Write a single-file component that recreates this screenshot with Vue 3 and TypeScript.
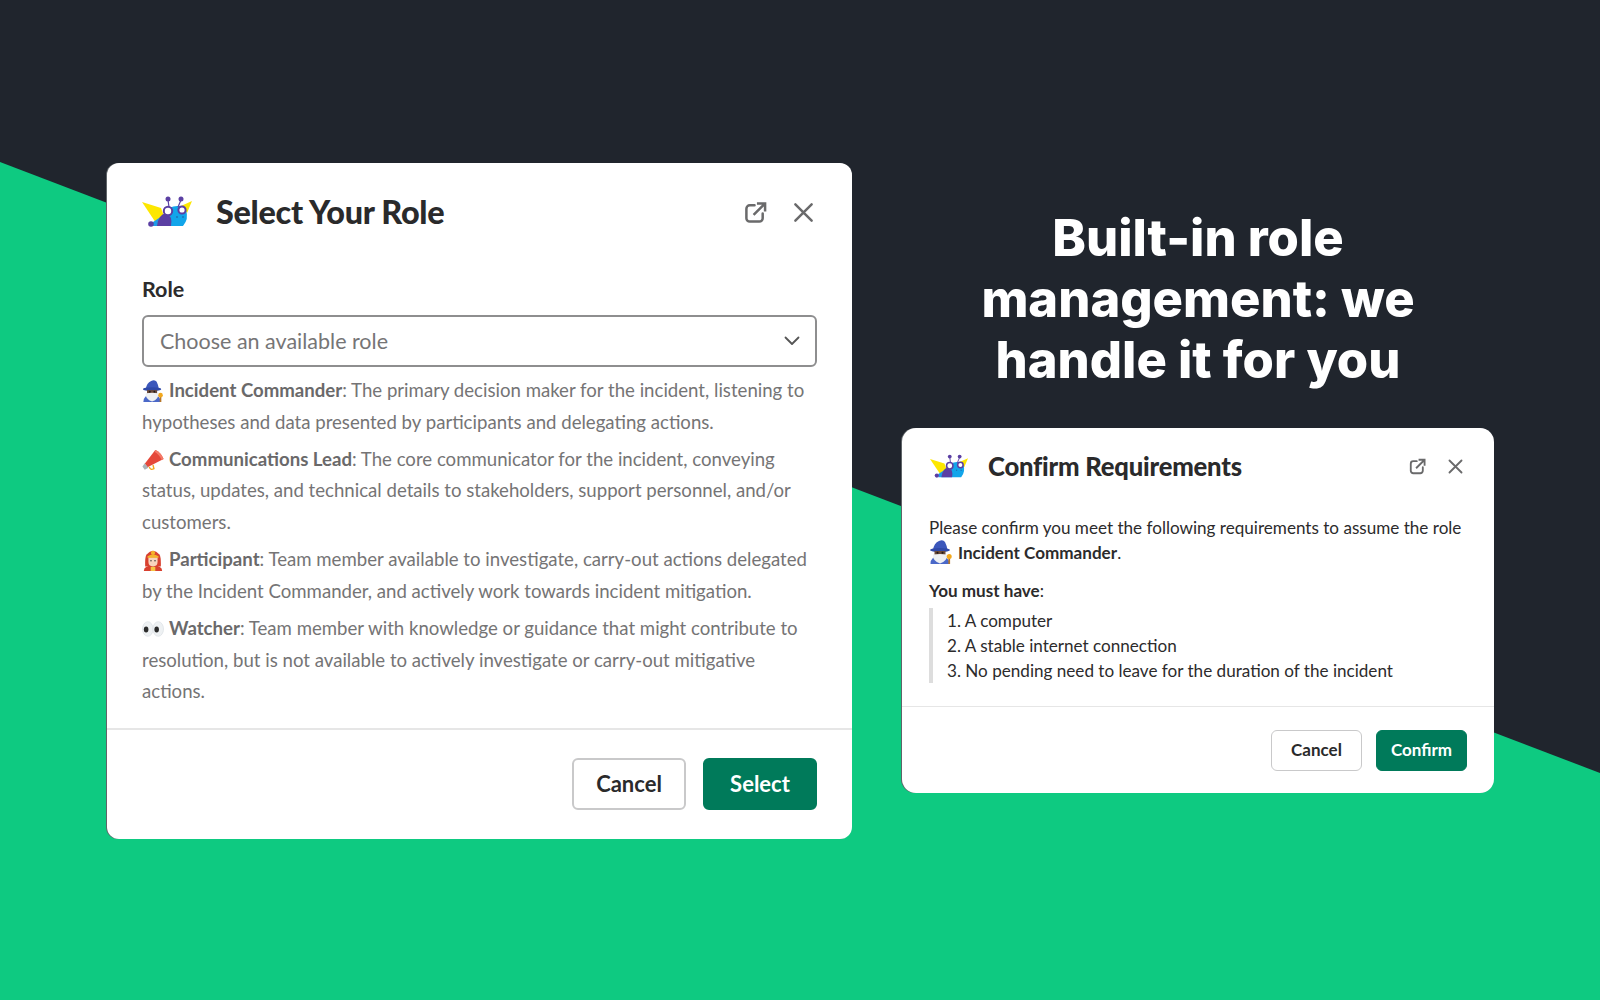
<script setup lang="ts">
interface Role { icon: string; name: string; text: string }
const roles: Role[] = [
  { icon: 'wizard', name: 'Incident Commander', text: ': The primary decision maker for the incident, listening to hypotheses and data presented by participants and delegating actions.' },
  { icon: 'horn', name: 'Communications Lead', text: ': The core communicator for the incident, conveying status, updates, and technical details to stakeholders, support personnel, and/or customers.' },
  { icon: 'fire', name: 'Participant', text: ': Team member available to investigate, carry-out actions delegated by the Incident Commander, and actively work towards incident mitigation.' },
  { icon: 'eyes', name: 'Watcher', text: ': Team member with knowledge or guidance that might contribute to resolution, but is not available to actively investigate or carry-out mitigative actions.' },
]
const requirements: string[] = ['A computer', 'A stable internet connection', 'No pending need to leave for the duration of the incident']
</script>

<template>
  <main class="page">
    <svg class="defs" aria-hidden="true">
      <symbol id="logo" viewBox="0 0 50 32">
        <path d="M0 6 L19 12 L25 28 L14 27 Z" fill="#fde700" />
        <path d="M39 10 L50 5 L45 17 Z" fill="#fde700" />
        <path d="M11 26 L20 20 L26 24 L25 30 L11 30 Z" fill="#1d9be8" />
        <path d="M27 12 Q38 7 44 14 Q47 23 41 30 L25 30 Q29 22 27 12 Z" fill="#12a5ea" />
        <path d="M15 30 Q16 19 24 17 Q31 20 29 30 Z" fill="#5b3fa3" />
        <circle cx="9" cy="28" r="2.800" fill="#5b3fa3" />
        <circle cx="26" cy="15" r="4.200" fill="#fff" stroke="#5b3fa3" stroke-width="2" />
        <circle cx="40" cy="14" r="3.600" fill="#fff" stroke="#5b3fa3" stroke-width="2" />
        <path d="M27 11 L26 4 M36 11 L39 4" stroke="#5b3fa3" stroke-width="1.200" fill="none" />
        <circle cx="26" cy="3" r="2.500" fill="#5b3fa3" />
        <circle cx="39" cy="3" r="2.500" fill="#5b3fa3" />
        <circle cx="35" cy="21" r=".9" fill="#1f6fb5" /><circle cx="41" cy="21" r=".9" fill="#1f6fb5" />
      </symbol>
      <symbol id="wizard" viewBox="0 0 24 24">
        <path d="M1.500 24 Q1.500 16 11 16 Q20 16 20.500 24 Z" fill="#4a68c8" />
        <path d="M4 10 Q5 3 10 1 Q14 -1 16 2 Q18 6 18.500 10 Z" fill="#3b57bb" />
        <ellipse cx="11" cy="10" rx="10" ry="2" fill="#2f49a8" />
        <path d="M5.500 11 H16.500 V16 H5.500 Z" fill="#6b4a3a" />
        <circle cx="8.500" cy="12.800" r="1" fill="#1f1a18" /><circle cx="13.500" cy="12.800" r="1" fill="#1f1a18" />
        <path d="M4 14.500 Q11 13.500 18 14.500 Q18.500 21 11 23.500 Q3.500 21 4 14.500 Z" fill="#eef0f2" />
        <rect x="19.300" y="18" width="1.800" height="6" fill="#b5762a" />
        <circle cx="20.200" cy="16.500" r="2.500" fill="#f2a81d" />
      </symbol>
      <symbol id="horn" viewBox="0 0 24 24">
        <path d="M14.500 1 Q21 4 23.500 11 L6 20 L3 16 Z" fill="#e5483a" />
        <path d="M15 1 Q21 4 23.500 11 L21.500 12 Q19 6 13.500 3 Z" fill="#f47a68" />
        <path d="M3 15.500 L7 20.500 L3 22.500 L0.500 19 Z" fill="#aab3b9" />
        <path d="M8 19.500 Q9 23.500 13 21.500 L12 17.500" fill="none" stroke="#f2a81d" stroke-width="1.500" />
      </symbol>
      <symbol id="fire" viewBox="0 0 24 24">
        <path d="M2 24 Q2 18 12 18 Q22 18 22 24 Z" fill="#d8402f" />
        <path d="M3.500 19 Q3 9 5 6 Q12 -2 19 6 Q21 9 20.500 19 L15 19 L9 19 Z" fill="#d8402f" />
        <path d="M7 9 H17 V14 Q17 19 12 19 Q7 19 7 14 Z" fill="#f8d3bd" />
        <path d="M6 8 Q12 4 18 8 V9.500 H6 Z" fill="#f5b32b" />
        <circle cx="12" cy="4.300" r="2.300" fill="#f5b32b" />
        <circle cx="9.800" cy="12.800" r=".8" fill="#333" /><circle cx="14.200" cy="12.800" r=".8" fill="#333" />
        <rect x="9.500" y="19.500" width="5" height="4.500" fill="#f5c542" />
      </symbol>
      <symbol id="eyes" viewBox="0 0 24 24">
        <ellipse cx="6.300" cy="12" rx="5.800" ry="8" fill="#eef1f3" stroke="#d5dbe0" stroke-width=".6" />
        <ellipse cx="17.700" cy="12" rx="5.800" ry="8" fill="#eef1f3" stroke="#d5dbe0" stroke-width=".6" />
        <ellipse cx="4.500" cy="12.500" rx="2.500" ry="3.200" fill="#2b2b2b" />
        <ellipse cx="16" cy="12.500" rx="2.500" ry="3.200" fill="#2b2b2b" />
      </symbol>
      <symbol id="ext" viewBox="0 0 24 24">
        <path d="M11 4.500 H6 A3.500 3.500 0 0 0 2.500 8 V18 A3.500 3.500 0 0 0 6 21.500 H16 A3.500 3.500 0 0 0 19.500 18 V13" fill="none" stroke="currentColor" stroke-width="2.600" stroke-linecap="round" />
        <path d="M10 14.500 L21 3.500 M13.500 2.500 H22 V11" fill="none" stroke="currentColor" stroke-width="2.600" />
      </symbol>
      <symbol id="close" viewBox="0 0 24 24">
        <path d="M3.500 3.500 L20.500 20.500 M20.500 3.500 L3.500 20.500" fill="none" stroke="currentColor" stroke-width="2.600" stroke-linecap="round" />
      </symbol>
    </svg>

    <div class="wedge"></div>

    <div class="stage">
      <section class="modal modal-large">
        <header class="head">
          <svg class="logo"><use href="#logo" /></svg>
          <h2>Select Your Role</h2>
          <svg class="tool"><use href="#ext" /></svg>
          <svg class="tool close"><use href="#close" /></svg>
        </header>
        <div class="body">
          <label class="field-label">Role</label>
          <div class="select">
            <span>Choose an available role</span>
            <svg viewBox="0 0 16 10" class="chev"><path d="M1.500 1.500 L8 8 L14.500 1.500" fill="none" stroke="currentColor" stroke-width="1.800" stroke-linecap="round" stroke-linejoin="round" /></svg>
          </div>
          <div class="help">
            <p v-for="r in roles" :key="r.name">
              <svg class="emoji"><use :href="'#' + r.icon" /></svg><strong>{{ r.name }}</strong>{{ r.text }}
            </p>
          </div>
        </div>
        <footer class="foot">
          <button class="btn">Cancel</button>
          <button class="btn primary">Select</button>
        </footer>
      </section>

      <div class="right">
        <h1>Built-in role<br />management: we<br />handle it for you</h1>
        <section class="modal modal-small">
          <header class="head">
            <svg class="logo"><use href="#logo" /></svg>
            <h2>Confirm Requirements</h2>
            <svg class="tool"><use href="#ext" /></svg>
            <svg class="tool close"><use href="#close" /></svg>
          </header>
          <div class="body">
            <p class="intro">Please confirm you meet the following requirements to assume the role <svg class="emoji"><use href="#wizard" /></svg><strong>Incident Commander</strong>.</p>
            <p class="must"><strong>You must have</strong>:</p>
            <ol class="quote">
              <li v-for="(q, i) in requirements" :key="q">{{ i + 1 }}. {{ q }}</li>
            </ol>
          </div>
          <footer class="foot">
            <button class="btn">Cancel</button>
            <button class="btn primary">Confirm</button>
          </footer>
        </section>
      </div>
    </div>
  </main>
</template>

<style>
html, body { margin: 0; background: #20252d; }
</style>

<style scoped>
.page {
  position: relative;
  width: 1600px;
  height: 1000px;
  overflow: hidden;
  background: #20252d;
  font-family: Lato, "Liberation Sans", sans-serif;
  color: #1d1c1d;
}
.defs { position: absolute; width: 0; height: 0; }
.wedge {
  position: absolute;
  inset: 0;
  background: #0eca81;
  clip-path: polygon(0 162px, 1600px 773px, 1600px 1000px, 0 1000px);
}
.stage {
  position: relative;
  display: flex;
  align-items: flex-start;
  gap: 50px;
  padding: 163px 0 0 107px;
}
.modal {
  background: #fff;
  border-radius: 12px;
  box-shadow: -1px 0 0 #5f6468;
}
.modal-large { width: 745px; height: 676px; display: flex; flex-direction: column; }
.head { display: flex; align-items: center; }
.logo { display: block; flex: none; }
h2 { margin: 0; flex: 1; font-weight: 900; }
.tool { display: block; flex: none; color: #6a6a6b; }
strong { font-weight: 700; }
p { margin: 0; }

.modal-large .head { padding: 28px 37px 0 35px; height: 42px; }
.modal-large .logo { width: 50px; height: 32px; margin-right: 24px; }
.modal-large h2 { font-size: 32.400px; line-height: 42px; letter-spacing: -.3px; color: #2a2a2b; }
.modal-large .tool { width: 23px; height: 23px; margin-left: 25px; }
.modal-large .body { padding: 0 35px; flex: 1; }
.field-label { display: block; margin-top: 41px; font-size: 21.500px; line-height: 30px; font-weight: 700; color: #2c2b2c; }
.select {
  display: flex;
  align-items: center;
  justify-content: space-between;
  margin-top: 11px;
  height: 52px;
  box-sizing: border-box;
  padding: 0 15px 0 16px;
  border: 2px solid #8e8e8f;
  border-radius: 6px;
  font-size: 21.500px;
  color: #767576;
}
.chev { width: 16px; height: 10px; color: #555; }
.help { margin-top: 8px; font-size: 18.630px; line-height: 31.600px; color: #757475; }
.help p + p { margin-top: 5.700px; }
.help strong { color: #6a696a; }
.emoji { display: inline-block; vertical-align: -5px; margin-right: 5px; }
.help .emoji { width: 22px; height: 22px; }
.foot { display: flex; justify-content: flex-end; border-top: 2px solid #e6e6e6; }
.modal-large .foot { padding: 28px 35px 29px; gap: 17px; }
.btn {
  font-family: inherit;
  font-weight: 700;
  color: #2a2a2b;
  background: #fff;
  border: 2px solid #c9c9ca;
  border-radius: 6px;
  padding: 0 0 2px;
}
.btn.primary { background: #007a5a; border-color: #007a5a; color: #fff; }
.modal-large .btn { height: 52px; font-size: 22px; width: 114px; }

.right { width: 592px; }
h1 {
  margin: 44px 0 38px;
  text-align: center;
  color: #fff;
  font-family: Inter, Roboto, sans-serif;
  font-weight: 800;
  font-size: 50.700px;
  line-height: 61px;
}
.modal-small { border-radius: 14px; }
.modal-small .head { padding: 21px 30px 0 28px; height: 35px; }
.modal-small .logo { width: 38px; height: 25px; margin-right: 20px; }
.modal-small h2 { font-size: 25.600px; line-height: 35px; letter-spacing: -.2px; color: #2a2a2b; }
.modal-small .tool { width: 17px; height: 17px; margin-left: 21px; }
.modal-small .body { padding: 0 27px; font-size: 17.100px; line-height: 25px; color: #2c2b2c; }
.intro { margin-top: 31px; }
.modal-small .emoji { width: 24px; height: 24px; vertical-align: -5px; margin-right: 5px; }
.must { margin-top: 13px; }
.quote { list-style: none; margin: 5px 0 0; padding: 0 0 0 14px; border-left: 4px solid #dddddd; }
.modal-small .foot { margin-top: 23px; padding: 23px 27px 22px; gap: 14px; border-top-width: 1.500px; }
.modal-small .btn { height: 41px; font-size: 17px; width: 91px; border-width: 1.500px; }
</style>
